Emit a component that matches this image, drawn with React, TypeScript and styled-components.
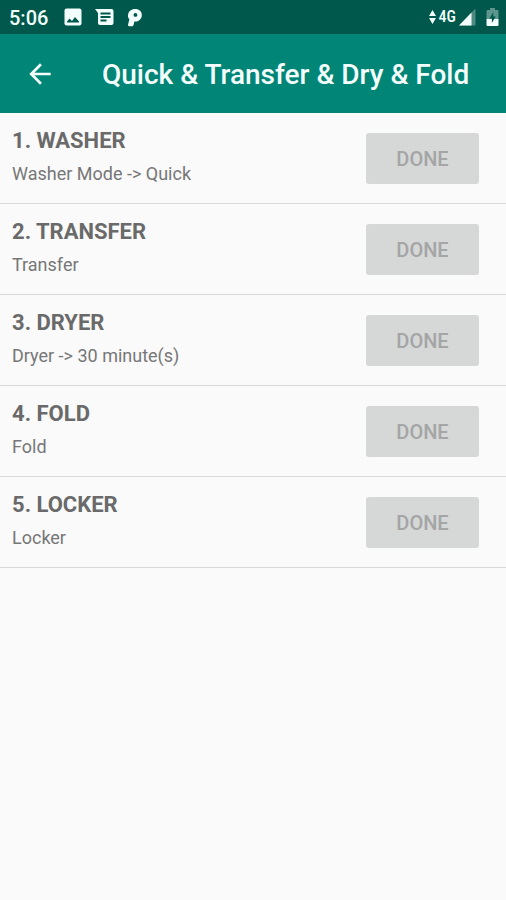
import React from "react";
import styled, { createGlobalStyle } from "styled-components";

const GlobalStyle = createGlobalStyle`
  *, *::before, *::after { box-sizing: border-box; }
  html, body { margin: 0; padding: 0; background: #fafafa; }
  body { font-family: Roboto, "Liberation Sans", sans-serif; }
`;

const Screen = styled.div`
  min-height: 100vh;
  display: flex;
  flex-direction: column;
  background: #fafafa;
`;

const StatusBar = styled.div`
  display: flex;
  align-items: center;
  justify-content: space-between;
  height: 34px;
  padding: 0 7px 0 9px;
  background: #00574b;
  color: #f2fffc;
`;

const StatusGroup = styled.div<{ $gap: number }>`
  display: flex;
  align-items: center;
  gap: ${(p) => p.$gap}px;
`;

const Clock = styled.time`
  width: 42px;
  padding-top: 1px;
  font-size: 20px;
  font-weight: 500;
  line-height: 24px;
`;

const Network = styled.span`
  display: flex;
  align-items: center;
  gap: 3px;
  font-family: "Roboto Condensed", Roboto, sans-serif;
  font-size: 16px;
  font-weight: 500;
  line-height: 20px;
`;

const AppBar = styled.header`
  display: flex;
  align-items: center;
  gap: 46px;
  height: 79px;
  padding: 0 24px;
  background: #008577;
  color: #f4fffd;
`;

const BackButton = styled.button`
  display: flex;
  flex: none;
  padding: 0;
  border: 0;
  background: none;
  color: inherit;
  cursor: pointer;
`;

const Title = styled.h1`
  margin: 0;
  padding-top: 2px;
  font-size: 28px;
  font-weight: 500;
  line-height: 32px;
  white-space: nowrap;
`;

const Steps = styled.ol`
  margin: 0;
  padding: 0;
  list-style: none;
`;

const Step = styled.li`
  display: flex;
  align-items: center;
  justify-content: space-between;
  height: 91px;
  padding: 0 27px 0 12px;
  border-bottom: 1px solid #d8d8d8;
`;

const StepText = styled.div`
  display: flex;
  flex-direction: column;
  gap: 6px;
  padding-bottom: 2px;
`;

const StepName = styled.h2`
  margin: 0;
  color: #6a6a6a;
  font-size: 22px;
  font-weight: 700;
  line-height: 28px;
`;

const StepDetail = styled.p`
  margin: 0;
  color: #777;
  font-size: 18px;
  line-height: 26px;
`;

const DoneButton = styled.button`
  width: 113px;
  height: 51px;
  padding: 2px 0 0;
  border: 0;
  border-radius: 3px;
  background: #d6d7d7;
  color: #a4a5a5;
  font-family: inherit;
  font-size: 20px;
  font-weight: 500;
`;

const PictureIcon = () => (
  <svg width="18" height="18" viewBox="0 0 18 18" aria-hidden="true">
    <rect x="0.5" y="0.5" width="17" height="17" rx="2" fill="currentColor" />
    <path d="M3 14.500v-1l2.500-3 2.500 2.500 3-4 4 4.500v1z" fill="#00574b" />
  </svg>
);

const MessageIcon = () => (
  <svg width="19" height="18" viewBox="0 0 19 18" aria-hidden="true">
    <path d="M0 1h16.500a2 2 0 0 1 2 2v12a2 2 0 0 1-2 2H5a2 2 0 0 1-2-2V5z" fill="currentColor" />
    <path d="M5.500 5.500h10M5.500 9h10M5.500 12.500h6" stroke="#00574b" strokeWidth="1.800" />
  </svg>
);

const ParkingIcon = () => (
  <svg width="16" height="19" viewBox="0 0 16 19" aria-hidden="true">
    <path
      d="M1 7.500C1.300 3.200 4 1 8.200 1c4 0 6.600 2.400 6.600 6 0 4-2.800 6.600-6.600 6.600H7.400L6.700 16.500C6.400 17.800 5.800 18.300 4.600 18.300H2.300c-1.100 0-1.500-.6-1.200-1.700L2.400 11C1.300 10.400.9 9 1 7.500z"
      fill="currentColor"
    />
    <circle cx="8.400" cy="6.900" r="1.900" fill="#00574b" />
  </svg>
);

const DataIcon = () => (
  <svg width="7" height="15" viewBox="0 0 7 15" aria-hidden="true">
    <path d="M3.500 0L7 6H0zM3.500 14L0 8h7z" fill="currentColor" />
  </svg>
);

const SignalIcon = () => (
  <svg width="17" height="18" viewBox="0 0 17 18" aria-hidden="true">
    <path d="M16.500 0.500V17.500H0z" fill="#4d8a82" />
    <path d="M12.500 4.600V17.500H0z" fill="currentColor" />
  </svg>
);

const BatteryIcon = () => (
  <svg width="13" height="20" viewBox="0 0 13 20" aria-hidden="true">
    <path d="M4 1h5v2h2.500q1 0 1 1v8H.5V4q0-1 1-1H4z" fill="#5d968e" />
    <path d="M.5 12h12v6q0 1-1 1h-10q-1 0-1-1z" fill="currentColor" />
    <path d="M7.300 5L3.500 11.500h2.400V16l3.800-6.500H7.300z" fill="#00574b" />
  </svg>
);

const BackIcon = () => (
  <svg width="32" height="32" viewBox="0 0 24 24" aria-hidden="true">
    <path d="M20 11H7.830l5.590-5.590L12 4l-8 8 8 8 1.410-1.410L7.830 13H20z" fill="currentColor" />
  </svg>
);

const steps = [
  { name: "WASHER", detail: "Washer Mode -> Quick" },
  { name: "TRANSFER", detail: "Transfer" },
  { name: "DRYER", detail: "Dryer -> 30 minute(s)" },
  { name: "FOLD", detail: "Fold" },
  { name: "LOCKER", detail: "Locker" },
];

export default function App() {
  return (
    <>
      <GlobalStyle />
      <Screen>
        <StatusBar>
          <StatusGroup $gap={13}>
            <Clock>5:06</Clock>
            <PictureIcon />
            <MessageIcon />
            <ParkingIcon />
          </StatusGroup>
          <StatusGroup $gap={10}>
            <Network>
              <DataIcon />
              4G
              <SignalIcon />
            </Network>
            <BatteryIcon />
          </StatusGroup>
        </StatusBar>
        <AppBar>
          <BackButton type="button" aria-label="Back">
            <BackIcon />
          </BackButton>
          <Title>Quick &amp; Transfer &amp; Dry &amp; Fold</Title>
        </AppBar>
        <main>
          <Steps>
            {steps.map((step, index) => (
              <Step key={step.name}>
                <StepText>
                  <StepName id={`step-${index}`}>
                    {index + 1}. {step.name}
                  </StepName>
                  <StepDetail>{step.detail}</StepDetail>
                </StepText>
                <DoneButton type="button" disabled aria-describedby={`step-${index}`}>
                  DONE
                </DoneButton>
              </Step>
            ))}
          </Steps>
        </main>
      </Screen>
    </>
  );
}
